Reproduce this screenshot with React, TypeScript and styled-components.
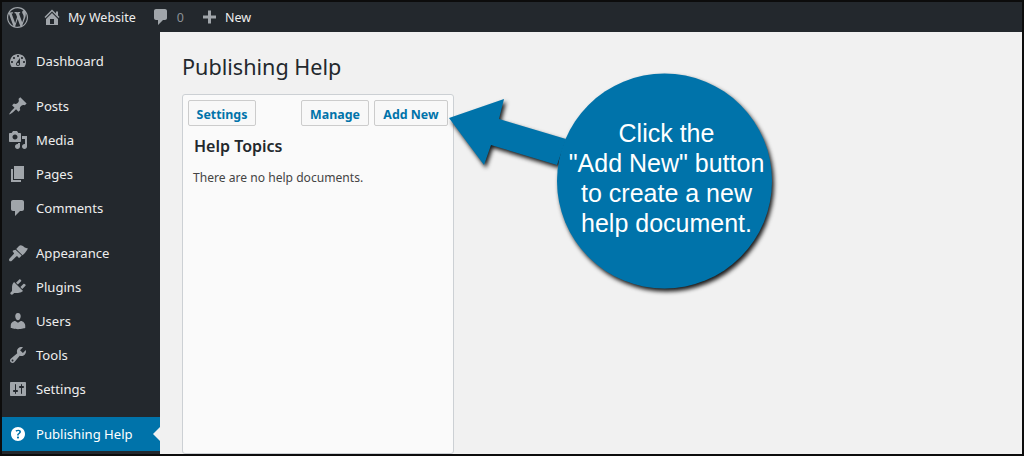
import styled, { createGlobalStyle } from 'styled-components';

const GlobalStyle = createGlobalStyle`
	html, body {
		margin: 0;
		padding: 0;
		background: #f1f1f1;
	}
	* {
		box-sizing: border-box;
	}
`;

// dashicons style paths, 20x20 box
const icons: Record<string, string> = {
	wordpress:
		'M20 10c0-5.51-4.49-10-10-10C4.48 0 0 4.49 0 10c0 5.52 4.48 10 10 10 5.51 0 10-4.48 10-10zM7.78 15.37L4.37 6.22c.55-.02 1.17-.08 1.17-.08.5-.06.44-1.13-.06-1.11 0 0-1.45.11-2.37.11-.18 0-.37 0-.58-.01C4.12 2.69 6.87 1.11 10 1.11c2.33 0 4.45.87 6.05 2.34-.68-.11-1.65.39-1.65 1.58 0 .74.45 1.36.9 2.1.35.61.55 1.36.55 2.46 0 1.49-1.4 5-1.4 5l-3.03-8.37c.54-.02.82-.17.82-.17.5-.05.44-1.25-.06-1.22 0 0-1.44.12-2.38.12-.87 0-2.33-.12-2.33-.12-.5-.03-.56 1.2-.06 1.22l.92.08 1.26 3.41zM17.41 10c.24-.64.74-1.87.43-4.25.7 1.29 1.05 2.71 1.05 4.25 0 3.29-1.73 6.24-4.4 7.78.97-2.59 1.94-5.2 2.92-7.78zM6.1 18.09C3.12 16.65 1.11 13.53 1.11 10c0-1.3.23-2.48.72-3.59C3.25 10.3 4.67 14.2 6.1 18.09zm4.03-6.63l2.58 6.98c-.86.29-1.76.45-2.71.45-.79 0-1.57-.11-2.29-.33.81-2.38 1.62-4.74 2.42-7.1z',
	home: 'M16 8.5l1.53 1.53-1.06 1.06L10 4.62l-6.47 6.47-1.06-1.06L10 2.5l4 4v-2h2v4zm-6-2.46l6 5.99V18H4v-5.97zM12 17v-5H8v5h4z',
	comment: 'M5 2h9c1.1 0 2 .9 2 2v7c0 1.1-.9 2-2 2h-2l-5 5v-5H5c-1.1 0-2-.9-2-2V4c0-1.1.9-2 2-2z',
	plus: 'M9 3.5h3v5h5v3h-5v5H9v-5H4v-3h5z',
	dashboard:
		'M3.76 16h12.48c1.1-1.37 1.76-3.11 1.76-5 0-4.42-3.58-8-8-8s-8 3.58-8 8c0 1.89.66 3.63 1.76 5zM10 4c.55 0 1 .45 1 1s-.45 1-1 1-1-.45-1-1 .45-1 1-1zM6 6c.55 0 1 .45 1 1s-.45 1-1 1-1-.45-1-1 .45-1 1-1zm8 0c.55 0 1 .45 1 1s-.45 1-1 1-1-.45-1-1 .45-1 1-1zm-5.37 5.55L12 7v6c0 1.1-.9 2-2 2s-2-.9-2-2c0-.57.24-1.08.63-1.45zM4 10c.55 0 1 .45 1 1s-.45 1-1 1-1-.45-1-1 .45-1 1-1zm12 0c.55 0 1 .45 1 1s-.45 1-1 1-1-.45-1-1 .45-1 1-1zm-5 3c0-.55-.45-1-1-1s-1 .45-1 1 .45 1 1 1 1-.45 1-1z',
	posts: 'M10.44 3.02l1.82-1.82 6.36 6.35-1.83 1.82c-1.05-.68-2.48-.57-3.41.36l-.75.75c-.92.93-1.04 2.35-.35 3.41l-1.83 1.82-2.41-2.41-2.8 2.79c-.42.42-3.38 2.71-3.8 2.29s1.86-3.39 2.28-3.81l2.79-2.79L4.1 9.36l1.83-1.82c1.05.69 2.48.57 3.4-.36l.75-.75c.93-.92 1.05-2.35.36-3.41z',
	media: 'M13 11V4c0-.55-.45-1-1-1h-1.67L9 1H5L3.67 3H2c-.55 0-1 .45-1 1v7c0 .55.45 1 1 1h10c.55 0 1-.45 1-1zM7 4.5c1.38 0 2.5 1.12 2.5 2.5S8.38 9.5 7 9.5 4.5 8.38 4.5 7 5.62 4.5 7 4.5zM14 6h5v10.5c0 1.38-1.12 2.5-2.5 2.5S14 17.88 14 16.5s1.12-2.5 2.5-2.5c.17 0 .34.02.5.05V9h-3V6zm-4 8.05V13h2v3.5c0 1.38-1.12 2.5-2.5 2.5S7 17.88 7 16.5 8.12 14 9.5 14c.17 0 .34.02.5.05z',
	pages: 'M6 15V2h10v13H6zm-1 1h8v2H3V5h2v11z',
	appearance:
		'M8.2 6l2.8-3c1-.9 2.2-.9 3.4-.2 1.6 1 2.8 2.6 5.6 2.6-1 1.6-2 3.6-5.5 6.9zM7.5 6.7l6.2 5.9-1.9 1.8c-.4.4-1 .4-1.4 0l-.8-.8c-.4-.4-1-.4-1.4 0l-4.3 4.1c-.7.7-1.9.8-2.5.2s-.5-1.8.2-2.5l4.1-4.3c.4-.4.4-1 0-1.4l-.7-.7c-.4-.4-.4-1 0-1.4z',
	plugins:
		'M13.11 4.36L9.87 7.6 8 5.73l3.24-3.24c.35-.34 1.05-.2 1.56.32.52.51.66 1.21.31 1.55zm-8 1.77l.91-1.12 9.01 9.01-1.19.84c-.71.71-2.63 1.16-3.82 1.16H6.14L4.9 17.26c-.59.59-1.54.59-2.12 0-.59-.58-.59-1.53 0-2.12l1.24-1.24v-3.88c0-1.13.4-3.19 1.09-3.89zm7.26 3.97l3.24-3.24c.34-.35 1.04-.21 1.55.31.52.51.66 1.21.31 1.55l-3.24 3.25z',
	users:
		'M10 9.25c-2.27 0-2.73-3.44-2.73-3.44C7 4.02 7.82 2 9.97 2c2.16 0 2.98 2.02 2.71 3.81 0 0-.41 3.44-2.68 3.44zm0 2.57L12.72 10c2.39 0 4.52 2.33 4.52 4.53v2.49s-3.65 1.13-7.24 1.13c-3.65 0-7.24-1.13-7.24-1.13v-2.49c0-2.25 1.94-4.48 4.47-4.48z',
	tools:
		'M16.68 9.77c-1.34 1.34-3.3 1.67-4.95.99l-5.41 6.52c-.99.99-2.59.99-3.58 0s-.99-2.59 0-3.57l6.52-5.42c-.68-1.65-.35-3.61.99-4.95 1.28-1.28 3.12-1.62 4.72-1.06l-2.89 2.89 2.82 2.82 2.86-2.87c.53 1.58.18 3.39-1.08 4.65zM3.81 16.21c.4.39 1.04.39 1.43 0 .4-.4.4-1.04 0-1.43-.39-.4-1.03-.4-1.43 0-.39.39-.39 1.03 0 1.43z',
	settings:
		'M18 16V4c0-.55-.45-1-1-1H3c-.55 0-1 .45-1 1v12c0 .55.45 1 1 1h14c.55 0 1-.45 1-1zM8 11h1c.55 0 1 .45 1 1s-.45 1-1 1H8v1.5c0 .28-.22.5-.5.5s-.5-.22-.5-.5V13H6c-.55 0-1-.45-1-1s.45-1 1-1h1V5.5c0-.28.22-.5.5-.5s.5.22.5.5V11zm5-2h-1c-.55 0-1-.45-1-1s.45-1 1-1h1V5.5c0-.28.22-.5.5-.5s.5.22.5.5V7h1c.55 0 1 .45 1 1s-.45 1-1 1h-1v5.5c0 .28-.22.5-.5.5s-.5-.22-.5-.5V9z',
	help: 'M17 10c0-3.87-3.14-7-7-7-3.87 0-7 3.13-7 7s3.13 7 7 7c3.86 0 7-3.13 7-7zm-6.3 1.48H9.14v-.43c0-.38.08-.7.24-.98s.46-.57.88-.89c.41-.29.68-.53.81-.71.14-.18.2-.39.2-.62 0-.25-.09-.44-.28-.58-.19-.13-.45-.19-.79-.19-.58 0-1.25.19-2 .57l-.64-1.28c.87-.49 1.8-.74 2.77-.74.81 0 1.45.2 1.92.58.48.39.71.91.71 1.55 0 .43-.09.8-.29 1.11-.19.32-.57.67-1.11 1.06-.38.28-.61.49-.71.63-.09.14-.14.32-.14.55v.35zm-1.47 2.74c-.18-.17-.27-.42-.27-.73 0-.33.08-.58.26-.75s.43-.25.77-.25c.32 0 .57.09.75.26s.27.42.27.74c0 .3-.09.55-.27.72-.18.18-.43.27-.75.27-.33 0-.58-.09-.76-.26z',
};

const menuGroups = [
	[{ label: 'Dashboard', icon: 'dashboard' }],
	[
		{ label: 'Posts', icon: 'posts' },
		{ label: 'Media', icon: 'media' },
		{ label: 'Pages', icon: 'pages' },
		{ label: 'Comments', icon: 'comment' },
	],
	[
		{ label: 'Appearance', icon: 'appearance' },
		{ label: 'Plugins', icon: 'plugins' },
		{ label: 'Users', icon: 'users' },
		{ label: 'Tools', icon: 'tools' },
		{ label: 'Settings', icon: 'settings' },
	],
];

function Icon({ name, size = 20 }: { name: string; size?: number }) {
	return (
		<svg width={size} height={size} viewBox="0 0 20 20" fill="currentColor" aria-hidden="true">
			<path d={icons[name]} />
		</svg>
	);
}

function App() {
	return (
		<>
			<GlobalStyle />
			<Frame>
				<TopBar>
					<BarLogo>
						<Icon name="wordpress" />
					</BarLogo>
					<BarItem>
						<Icon name="home" />
						My Website
					</BarItem>
					<BarItem $muted>
						<Icon name="comment" />0
					</BarItem>
					<BarItem>
						<Icon name="plus" />
						New
					</BarItem>
				</TopBar>
				<Body>
					<Sidebar>
						{menuGroups.map(group => (
							<MenuGroup key={group[0].label}>
								{group.map(item => (
									<MenuItem key={item.label}>
										<Icon name={item.icon} />
										{item.label}
									</MenuItem>
								))}
							</MenuGroup>
						))}
						<MenuGroup>
							<MenuItem $current>
								<Icon name="help" />
								Publishing Help
							</MenuItem>
						</MenuGroup>
					</Sidebar>
					<Main>
						<PageTitle>Publishing Help</PageTitle>
						<Panel>
							<PanelToolbar>
								<ToolButton $width={68}>Settings</ToolButton>
								<ToolbarRight>
									<ToolButton $width={68}>Manage</ToolButton>
									<ToolButton $width={74}>Add New</ToolButton>
								</ToolbarRight>
							</PanelToolbar>
							<PanelTitle>Help Topics</PanelTitle>
							<PanelText>There are no help documents.</PanelText>
						</Panel>
					</Main>
				</Body>
				<Callout>
					<CalloutShape viewBox="0 0 335 230">
						<g>
							<polygon points="4,50 59,31 54,51 121,71 112,97 46,77 39,97" />
							<circle cx="219.5" cy="113" r="107.5" />
						</g>
					</CalloutShape>
					<CalloutText>
						Click the
						<br />
						"Add New" button
						<br />
						to create a new
						<br />
						help document.
					</CalloutText>
				</Callout>
			</Frame>
		</>
	);
}

const Frame = styled.div`
	position: relative;
	display: flex;
	flex-direction: column;
	width: 1024px;
	height: 456px;
	overflow: hidden;
	border: 2px solid #0c0c0c;
	background: #f1f1f1;
	font-family: 'Noto Sans', 'Open Sans', sans-serif;
`;

const TopBar = styled.div`
	display: flex;
	align-items: center;
	flex: 0 0 30px;
	background: #23282d;
	color: #eee;
	font-size: 12.5px;
`;

const BarLogo = styled.div`
	display: flex;
	padding: 0 14px 0 5px;
	color: #a0a5aa;

	svg {
		width: 21px;
		height: 21px;
	}
`;

const BarItem = styled.div<{ $muted?: boolean }>`
	display: flex;
	align-items: center;
	gap: 6px;
	margin-right: 15px;
	color: ${props => (props.$muted ? '#8b9095' : '#eee')};

	svg {
		color: #a0a5aa;
	}
`;

const Body = styled.div`
	display: flex;
	flex: 1;
	min-height: 0;
`;

const Sidebar = styled.nav`
	display: flex;
	flex-direction: column;
	gap: 11px;
	flex: 0 0 158px;
	padding-top: 12px;
	background: #23282d;
`;

const MenuGroup = styled.div`
	display: flex;
	flex-direction: column;
`;

const MenuItem = styled.div<{ $current?: boolean }>`
	position: relative;
	display: flex;
	align-items: center;
	gap: 8px;
	height: 34px;
	padding-left: 6px;
	font-size: 13.1px;
	color: ${props => (props.$current ? '#fff' : '#eee')};
	background: ${props => (props.$current ? '#0073aa' : 'transparent')};

	svg {
		flex: none;
		color: ${props => (props.$current ? '#fff' : '#a0a5aa')};
	}

	${props =>
		props.$current &&
		`
		&::after {
			content: '';
			position: absolute;
			right: 0;
			top: 50%;
			margin-top: -7px;
			border: 7px solid transparent;
			border-right-color: #f1f1f1;
			border-left-width: 0;
		}
	`}
`;

const Main = styled.main`
	display: flex;
	flex-direction: column;
	flex: 1;
	min-width: 0;
	padding: 19px 0 0 22px;
`;

const PageTitle = styled.h1`
	margin: 0 0 11px;
	font-size: 21.6px;
	font-weight: 400;
	line-height: 32px;
	color: #23282d;
`;

const Panel = styled.section`
	flex: 1;
	width: 272px;
	padding: 5px 5px 0;
	background: #fafafa;
	border: 1px solid #ccd0d4;
	border-radius: 3px;
`;

const PanelToolbar = styled.div`
	display: flex;
	justify-content: space-between;
`;

const ToolbarRight = styled.div`
	display: flex;
	gap: 5px;
`;

const ToolButton = styled.button<{ $width: number }>`
	width: ${props => props.$width}px;
	height: 26px;
	padding: 2px 0 0;
	background: #f8f8f8;
	border: 1px solid #ccc;
	border-radius: 2px;
	color: #0073aa;
	font-family: inherit;
	font-size: 12.4px;
	font-weight: 700;
`;

const PanelTitle = styled.h2`
	margin: 9px 0 0 6px;
	font-size: 16px;
	font-weight: 600;
	line-height: 22px;
	color: #23282d;
`;

const PanelText = styled.p`
	margin: 11px 0 0 5px;
	font-size: 12.1px;
	line-height: 20px;
	color: #444;
`;

const Callout = styled.div`
	position: absolute;
	left: 443px;
	top: 66px;
	width: 335px;
	height: 230px;
`;

const CalloutShape = styled.svg`
	display: block;
	width: 100%;
	height: 100%;
	overflow: visible;

	g {
		fill: #0073aa;
		filter: drop-shadow(2px 3px 2px rgba(0, 0, 0, 0.9));
	}
`;

const CalloutText = styled.div`
	position: absolute;
	left: 114px;
	top: 50px;
	width: 215px;
	text-align: center;
	color: #fff;
	font-family: 'Liberation Sans', Arial, sans-serif;
	font-size: 25px;
	line-height: 30px;
`;

export default App;
